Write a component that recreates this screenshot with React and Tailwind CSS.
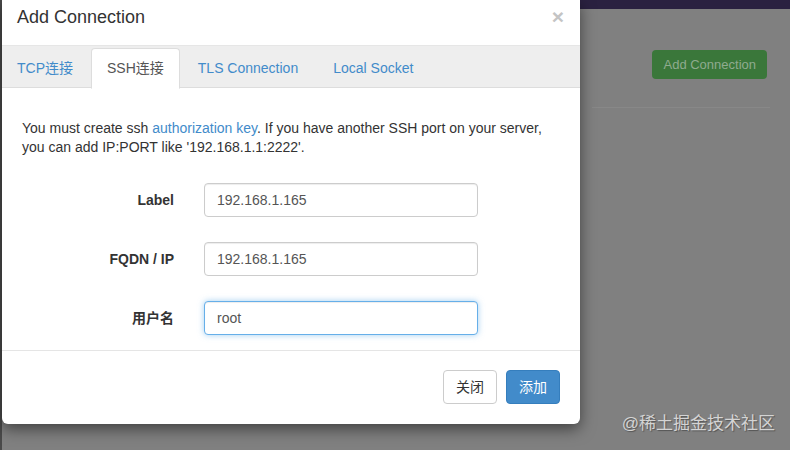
import React from 'react';

const font = { fontFamily: '"Liberation Sans", Arial, "Noto Sans CJK SC", sans-serif' };

function Field({ label, value, focused }) {
  return (
    <div className="flex items-center h-[34px]">
      <label className="w-[172px] text-right text-[14px] font-bold text-[#333]">{label}</label>
      <div className="ml-[30px]">
        <input
          readOnly
          value={value}
          className={
            'w-[274px] h-[34px] px-[12px] rounded-[4px] border text-[14px] text-[#555] bg-white outline-none ' +
            (focused
              ? 'border-[#66afe9] shadow-[inset_0_1px_1px_rgba(0,0,0,.075),0_0_6px_rgba(102,175,233,.6)]'
              : 'border-[#ccc] shadow-[inset_0_1px_1px_rgba(0,0,0,.075)]')
          }
        />
      </div>
    </div>
  );
}

function App() {
  // per tab padding, the CJK labels run a little wider in the reference
  const tabs = [
    { name: 'TCP连接', pad: 'pl-[15px] pr-[16px]' },
    { name: 'SSH连接', pad: 'pl-[15px] pr-[15px]' },
    { name: 'TLS Connection', pad: 'pl-[16px] pr-[16px]' },
    { name: 'Local Socket', pad: 'pl-[17px] pr-[15px]' },
  ];

  return (
    <div className="relative w-[790px] h-[450px] overflow-hidden bg-[#808080]" style={font}>
      {/* page behind the overlay */}
      <div className="h-[9px] bg-[#2a2140]" />
      <div className="flex flex-col items-end pr-[23px] pt-[41px]">
        <button className="h-[29px] px-[11px] rounded-[4px] bg-[#3a773a] text-[13px] text-[#8fab8f]">
          Add Connection
        </button>
        <div className="mt-[28px] w-[178px] mr-[-3px] border-t border-[#888]" />
      </div>
      <div className="absolute left-0 top-0 w-[2px] h-[450px] bg-[#4a4a4a]" />

      {/* modal */}
      <div className="absolute left-[2px] top-0 w-[578px] bg-white rounded-b-[6px] shadow-[0_5px_15px_rgba(0,0,0,0.5)]">
        <div className="flex items-start justify-between h-[45px] pl-[15px] pr-[16px] pt-[4px]">
          <h4 className="text-[18px] leading-[26px] text-[#333]">Add Connection</h4>
          <span className="text-[21px] leading-[26px] font-bold text-[#c4c4c4]">×</span>
        </div>

        <div className="flex h-[43px] pt-[2px] bg-[#eee] border-t border-[#e6e6e6] border-b border-b-[#ddd]">
          {tabs.map((t, i) => (
            <div
              key={t.name}
              className={
                'h-[41px] mr-[2px] flex items-center text-[14px] rounded-t-[4px] ' +
                t.pad +
                (i === 1
                  ? ' bg-white text-[#555] border border-[#ddd] border-b-white'
                  : ' text-[#428bca]')
              }
            >
              {t.name}
            </div>
          ))}
        </div>

        <div className="px-[20px] pt-[31px] pb-[15px]">
          <p className="text-[14px] leading-[19px] text-[#333]">
            You must create ssh <span className="text-[#428bca]">authorization key</span>. If you have another SSH port on your server,
            you can add IP:PORT like '192.168.1.1:2222'.
          </p>
          <div className="mt-[26px] flex flex-col gap-[25px] ml-[-20px]">
            <Field label="Label" value="192.168.1.165" />
            <Field label="FQDN / IP" value="192.168.1.165" />
            <Field label="用户名" value="root" focused />
          </div>
        </div>

        <div className="flex justify-end gap-[9px] border-t border-[#e5e5e5] pt-[19px] pb-[20px] px-[20px]">
          <button className="w-[54px] h-[34px] rounded-[4px] border border-[#ccc] bg-white text-[14px] text-[#333]">关闭</button>
          <button className="w-[54px] h-[34px] rounded-[4px] border border-[#357ebd] bg-[#428bca] text-[14px] text-white">添加</button>
        </div>
      </div>

      <div className="absolute right-[15px] bottom-[14px] text-[17px] text-[#d4d4d4] [text-shadow:1px_1px_1px_rgba(0,0,0,0.35)]">
        @稀土掘金技术社区
      </div>
    </div>
  );
}

export default App;
